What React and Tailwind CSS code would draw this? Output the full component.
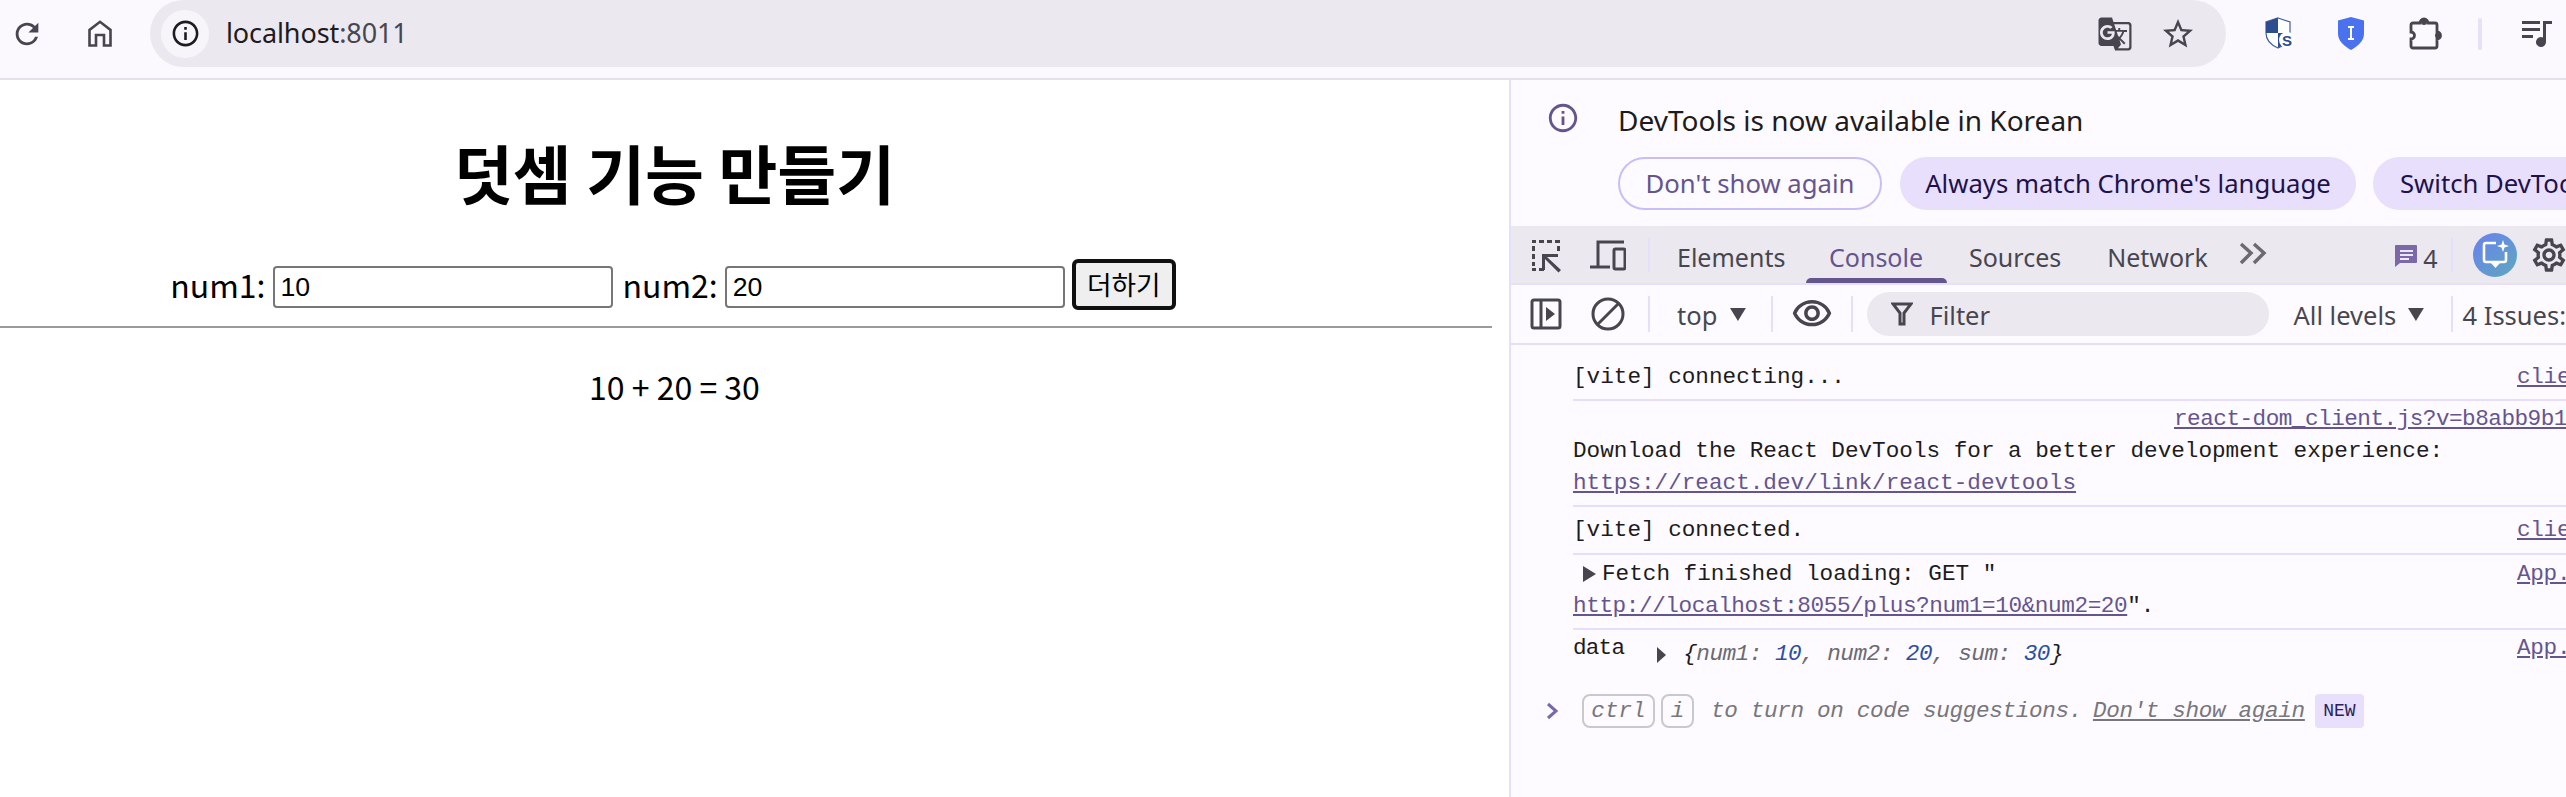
import React from "react";
import { MdGTranslate, MdOutlineSettings } from "react-icons/md";

const uiFont = "font-['Noto_Sans','Noto_Sans_CJK_KR',sans-serif]";
const monoFont = "font-['Liberation_Mono','Noto_Sans_CJK_KR',monospace]";
const pageFont = "font-['Noto_Sans_CJK_KR',sans-serif]";

function Icon({ d, size = 24, className = "", viewBox = "0 0 24 24" }) {
  return (
    <svg width={size} height={size} viewBox={viewBox} className={className} fill="currentColor">
      <path d={d} />
    </svg>
  );
}

const INFO =
  "M11 7h2v2h-2zm0 4h2v6h-2zm1-9C6.48 2 2 6.48 2 12s4.48 10 10 10 10-4.48 10-10S17.52 2 12 2zm0 18c-4.41 0-8-3.59-8-8s3.59-8 8-8 8 3.59 8 8-3.59 8-8 8z";
const RELOAD =
  "M17.65 6.35A7.958 7.958 0 0 0 12 4c-4.42 0-7.99 3.58-7.99 8s3.57 8 7.99 8c3.73 0 6.84-2.55 7.73-6h-2.08A5.99 5.99 0 0 1 12 18c-3.31 0-6-2.69-6-6s2.69-6 6-6c1.66 0 3.14.69 4.22 1.78L13 11h7V4l-2.35 2.35z";
const STAR =
  "M22 9.24l-7.19-.62L12 2 9.19 8.63 2 9.24l5.46 4.73L5.82 21 12 17.27 18.18 21l-1.63-7.03L22 9.24zM12 15.4l-3.76 2.27 1-4.28-3.32-2.88 4.38-.38L12 6.1l1.71 4.04 4.38.38-3.32 2.88 1 4.28L12 15.4z";
const EYE =
  "M12 6a9.77 9.77 0 0 1 8.82 5.5C19.17 14.87 15.79 17 12 17s-7.17-2.13-8.82-5.5A9.77 9.77 0 0 1 12 6m0-2C7 4 2.73 7.11 1 11.5 2.73 15.89 7 19 12 19s9.27-3.11 11-7.5C21.27 7.11 17 4 12 4zm0 5a2.5 2.5 0 0 1 0 5 2.5 2.5 0 0 1 0-5m0-2c-2.48 0-4.5 2.02-4.5 4.5S9.52 16 12 16s4.5-2.02 4.5-4.5S14.48 7 12 7z";

function Divider({ className = "" }) {
  return <div className={`w-[2px] shrink-0 bg-[#e6dffc] ${className}`} />;
}

function Caret({ className = "" }) {
  return (
    <svg width="18" height="14" viewBox="0 0 18 14" className={className} fill="#47464f">
      <path d="M1 0h16L9 13z" />
    </svg>
  );
}

function BrowserBar() {
  return (
    <div className={`flex h-[80px] shrink-0 border-b-[2px] border-[#e4e1ea] bg-[#fbf8fe] ${uiFont}`}>
      <div className="flex h-[67px] items-center">
        <Icon d={RELOAD} size={34} className="ml-[10px] text-[#48454f]" />
        <svg width="24" height="27" viewBox="0 0 24 27" className="ml-[44px] text-[#48454f]" fill="none" stroke="currentColor" strokeWidth="2.600">
          <path d="M1.500 25.500V10L12 1.800 22.500 10v15.500h-6.500V15H8v10.500z" />
        </svg>
      </div>
      <div className="ml-[38px] flex h-[67px] w-[2076px] shrink-0 items-center rounded-full bg-[#ece8f0]">
        <div className="ml-[11px] flex size-[48px] items-center justify-center rounded-full bg-[#f8f5fa]">
          <Icon d={INFO} size={31} className="text-[#1d1b20]" />
        </div>
        <span className="ml-[17px] mb-[2px] w-[177px] whitespace-nowrap text-[27px] leading-none tracking-[-0.1px] text-[#1d1b20]">
          localhost<span className="text-[#47464f]">:8011</span>
        </span>
        <MdGTranslate size={36} className="ml-[1694px] text-[#47464f]" />
        <Icon d={STAR} size={36} className="ml-[27px] text-[#47464f]" />
      </div>
      <div className="flex h-[67px] items-center">
        <svg width="30" height="33" viewBox="0 0 30 33" className="ml-[39px]">
          <path d="M13 1l12 4v11c0 7-5 12-12 15C6 28 1 23 1 16V5z" fill="#fff" stroke="#3d5f9d" strokeWidth="1.2" />
          <path d="M13 1v15H1V5z" fill="#2c4d8f" />
          <path d="M13 16h11c0 6-4 11-11 15z" fill="#2c4d8f" />
          <circle cx="22" cy="23" r="8" fill="#fff" />
          <text x="22" y="28.5" textAnchor="middle" fontSize="15" fontWeight="700" fill="#2c4d8f" fontFamily="Liberation Sans">
            S
          </text>
        </svg>
        <svg width="28" height="33" viewBox="0 0 28 33" className="ml-[42px]">
          <path d="M14 0l13 3.5v13C27 24 21 29 14 33 7 29 1 24 1 16.500v-13z" fill="#4a72ee" />
          <path d="M11 9h6v2h-2v10h2v2h-6v-2h2V11h-2z" fill="#fff" />
        </svg>
        <svg width="34" height="34" viewBox="0 0 34 34" className="ml-[43px] text-[#47464f]" fill="none" stroke="currentColor" strokeWidth="2.800">
          <path d="M5 6h7a4 4 0 0 1 8 0h7a2 2 0 0 1 2 2v7a3.500 3.500 0 0 1 0 7v7a2 2 0 0 1-2 2H5a2 2 0 0 1-2-2v-7a3.500 3.500 0 0 0 0-7V8a2 2 0 0 1 2-2z" />
          <circle cx="16" cy="5" r="3" fill="currentColor" stroke="none" />
          <circle cx="30" cy="18.500" r="3" fill="currentColor" stroke="none" />
        </svg>
        <div className="ml-[36px] h-[32px] w-[4px] rounded bg-[#e6e0fb]" />
        <svg width="32" height="28" viewBox="0 0 32 28" className="ml-[39px]" fill="#47464f">
          <path d="M1 1h18v3H1zM1 8h18v3H1zM1 15h11v3H1zM22 1h9v3h-6v18a5 5 0 1 1-3-4.500z" />
        </svg>
      </div>
    </div>
  );
}

function MainPage() {
  return (
    <div className={`w-[1509px] shrink-0 bg-white text-black ${pageFont}`}>
      <h1 className="mt-[44px] h-[94px] w-[1349px] text-center text-[64px] font-bold leading-[94px]">덧셈 기능 만들기</h1>
      <div className="mt-[41px] flex h-[51px] w-[1346px] justify-center gap-[7px] text-[32px] leading-[50px]">
        <label>num1:</label>
        <input
          readOnly
          value="10"
          className="mt-[7px] h-[42px] w-[340px] rounded-[4px] border-[2px] border-[#767676] px-[6px] font-['Liberation_Sans',sans-serif] text-[26.67px] leading-none text-black"
        />
        <label className="ml-[3px]">num2:</label>
        <input
          readOnly
          value="20"
          className="mt-[7px] h-[42px] w-[340px] rounded-[4px] border-[2px] border-[#767676] px-[6px] font-['Liberation_Sans',sans-serif] text-[26.67px] leading-none text-black"
        />
        <button className="h-[51px] w-[104px] rounded-[6px] border-[4px] border-[#101010] bg-[#efefef] text-[26.67px] leading-none">더하기</button>
      </div>
      <hr className="mt-[16px] h-[2px] w-[1492px] border-0 bg-[#9a9a9a]" />
      <p className="mt-[34px] w-[1349px] text-center text-[32px] leading-[48px]">10 + 20 = 30</p>
    </div>
  );
}

function Banner() {
  return (
    <div className="h-[146px] shrink-0 bg-[#fdfbff]">
      <div className="flex h-[76px] items-center">
        <Icon d={INFO} size={34} className="ml-[35px] text-[#65558f]" />
        <span className="ml-[38px] mt-[4px] text-[28px] text-[#1d1b20]">DevTools is now available in Korean</span>
      </div>
      <div className="mt-[1px] flex whitespace-nowrap text-[25.7px] leading-none">
        <button className="ml-[107px] h-[53px] w-[264px] shrink-0 rounded-full border-[2px] border-[#cbbdf5] text-[#65558f]">Don't show again</button>
        <button className="ml-[18px] h-[53px] w-[456px] shrink-0 rounded-full bg-[#e8dffc] text-[#1d124b]">Always match Chrome's language</button>
        <button className="ml-[17px] h-[53px] w-[300px] shrink-0 rounded-full bg-[#e8dffc] pl-[27px] text-left text-[#1d124b]">Switch DevTools to Korean</button>
      </div>
    </div>
  );
}

function TabBar() {
  return (
    <div className="flex h-[59px] shrink-0 items-center border-b-[2px] border-[#e6dffc] bg-[#ece8f0] text-[25px] text-[#47464f]">
      <svg width="36" height="36" viewBox="0 0 36 36" className="ml-[17px] shrink-0" fill="#47464f">
        <path d="M4 3h4v3H4zM11 3h5v3h-5zM19 3h5v3h-5zM27 3h5v3h-5zM4 9h3v5H4zM4 17h3v5H4zM4 25h3v4H4zM4 31h4v3H4zM11 31h5v3h-5zM29 9h3v5h-3z" />
        <path d="M14 17h16v3H19l14 13-2.500 2.500L17 22v11h-3z" />
      </svg>
      <svg width="36" height="32" viewBox="0 0 36 32" className="ml-[26px] shrink-0" fill="none" stroke="#47464f" strokeWidth="3">
        <path d="M34 3H8v25M0 28h20" />
        <rect x="24" y="10" width="11" height="20" rx="1.500" />
      </svg>
      <Divider className="ml-[22px] h-[34px]" />
      <span className="ml-[27px] mt-[6px] w-[106px] whitespace-nowrap">Elements</span>
      <div className="relative ml-[46px] flex h-[57px] items-center text-[#65558f]">
        <span className="mt-[6px] w-[94px] whitespace-nowrap">Console</span>
        <div className="absolute bottom-0 left-[-23px] h-[5px] w-[141px] rounded-t-[5px] bg-[#65558f]" />
      </div>
      <span className="ml-[46px] mt-[6px] w-[94px] whitespace-nowrap">Sources</span>
      <span className="ml-[46px] mt-[6px] w-[99px] whitespace-nowrap">Network</span>
      <svg width="28" height="24" viewBox="0 0 28 24" className="ml-[33px] mb-[2px] shrink-0" fill="none" stroke="#6b6a70" strokeWidth="3.500">
        <path d="M2 2l10 9-10 10M15 2l10 9-10 10" />
      </svg>
      <svg width="24" height="24" viewBox="0 0 24 24" className="ml-[127px] mt-[2px] shrink-0" fill="#7b68a8">
        <path d="M2 1h20a1 1 0 0 1 1 1v16a1 1 0 0 1-1 1H6l-5 4V2a1 1 0 0 1 1-1z" />
        <path d="M6 6h13v2H6zM6 10h13v2H6zM6 14h9v2H6z" fill="#ece8f0" />
      </svg>
      <span className="ml-[5px] mt-[8px] w-[20px] leading-none">4</span>
      <Divider className="ml-[13px] h-[34px]" />
      <div className="ml-[20px] flex size-[44px] shrink-0 items-center justify-center rounded-full bg-gradient-to-br from-[#6a7fef] to-[#5fa6bd]">
        <svg width="28" height="30" viewBox="0 0 28 30" fill="none" stroke="#fff" strokeWidth="2.600">
          <path d="M15 3H5a2 2 0 0 0-2 2v15a2 2 0 0 0 2 2h18a2 2 0 0 0 2-2v-8" />
          <path d="M10 23h9l-4.500 5z" fill="#fff" stroke="none" />
          <path d="M22 0l1.500 4.500L28 6l-4.500 1.500L22 12l-1.500-4.500L16 6l4.500-1.500z" fill="#fff" stroke="none" />
        </svg>
      </div>
      <MdOutlineSettings size={40} className="ml-[12px] shrink-0 text-[#47464f]" />
    </div>
  );
}

function FilterBar() {
  return (
    <div className="flex h-[60px] shrink-0 items-center whitespace-nowrap border-b-[2px] border-[#e6dffc] bg-[#fdfbff] text-[25.5px] text-[#47464f]">
      <svg width="32" height="32" viewBox="0 0 32 32" className="ml-[19px] shrink-0" fill="none" stroke="#47464f" strokeWidth="3">
        <rect x="2" y="2" width="28" height="28" rx="2" />
        <path d="M11 2v28" />
        <path d="M16 9l9 7-9 7z" fill="#47464f" stroke="none" />
      </svg>
      <svg width="34" height="34" viewBox="0 0 34 34" className="ml-[29px] shrink-0" fill="none" stroke="#47464f" strokeWidth="3">
        <circle cx="17" cy="17" r="15" />
        <path d="M7 27L27 7" />
      </svg>
      <Divider className="ml-[23px] h-[36px]" />
      <span className="ml-[27px] mt-[2px] w-[41px]">top</span>
      <Caret className="ml-[11px] mt-[2px]" />
      <Divider className="ml-[24px] h-[36px]" />
      <Icon d={EYE} size={42} className="ml-[18px] shrink-0" />
      <Divider className="ml-[18px] h-[36px]" />
      <div className="ml-[14px] flex h-[44px] w-[402px] shrink-0 items-center rounded-full bg-[#ece8f0]">
        <svg width="22" height="24" viewBox="0 0 22 24" className="ml-[24px]" fill="none" stroke="#47464f" strokeWidth="3">
          <path d="M2 2h18l-7 9v11h-4V11z" />
        </svg>
        <span className="ml-[17px] mt-[2px]">Filter</span>
      </div>
      <span className="ml-[25px] mt-[2px] w-[104px]">All levels</span>
      <Caret className="ml-[10px] mt-[2px]" />
      <Divider className="ml-[26px] h-[36px]" />
      <span className="ml-[10px] mt-[2px]">4 Issues:</span>
    </div>
  );
}

function Row({ children, source, className = "" }) {
  return (
    <div className={`ml-[62px] flex w-[1100px] border-b-[2px] border-[#e6dffc] ${className}`}>
      <div className="w-[944px] shrink-0">{children}</div>
      {source && <a className="tracking-[-0.3px] text-[#65558f] underline">{source}</a>}
    </div>
  );
}

function ConsolePanel() {
  return (
    <div className={`flex-1 bg-[#fdfbff] text-[22.67px] leading-[32px] text-[#1d1b20] ${monoFont} whitespace-nowrap`}>
      <Row source="client:495" className="h-[56px] pt-[16px]">
        [vite] connecting...
      </Row>
      <div className="ml-[62px] h-[106px] w-[1100px] border-b-[2px] border-[#e6dffc] pt-[2px]">
        <a className="ml-[601px] block h-[32px] tracking-[-0.5px] text-[#65558f] underline">react-dom_client.js?v=b8abb9b1</a>
        <div>Download the React DevTools for a better development experience:</div>
        <a className="text-[#65558f] underline">https://react.dev/link/react-devtools</a>
      </div>
      <Row source="client:618" className="h-[48px] pt-[7px]">
        [vite] connected.
      </Row>
      <Row source="App.jsx:14" className="h-[75px] pt-[3px]">
        <div className="flex items-center">
          <svg width="13" height="16" viewBox="0 0 13 16" className="ml-[10px] mr-[6px]" fill="#47464f">
            <path d="M0 0l13 8-13 8z" />
          </svg>
          Fetch finished loading: GET "
        </div>
        <div>
          <a className="tracking-[-0.4px] text-[#65558f] underline">http://localhost:8055/plus?num1=10&amp;num2=20</a>".
        </div>
      </Row>
      <div className="ml-[62px] flex h-[50px] w-[1100px] pt-[2px]">
        <div className="flex w-[944px] shrink-0 items-start">
          <span className="tracking-[-0.8px]">data</span>
          <svg width="9" height="16" viewBox="0 0 9 16" className="ml-[33px] mt-[15px]" fill="#47464f">
            <path d="M0 0l9 8-9 8z" />
          </svg>
          <span className="ml-[17px] mt-[6px] italic tracking-[-0.5px] text-[#6b6a72]">
            <span className="text-[#1d1b20]">{"{"}</span>num1: <span className="text-[#2a4fa3]">10</span>, num2:{" "}
            <span className="text-[#2a4fa3]">20</span>, sum: <span className="text-[#2a4fa3]">30</span>
            <span className="text-[#1d1b20]">{"}"}</span>
          </span>
        </div>
        <a className="tracking-[-0.3px] text-[#65558f] underline">App.jsx:15</a>
      </div>
      <div className="mt-[13px] flex h-[35px] items-center italic text-[#77767d]">
        <svg width="14" height="18" viewBox="0 0 14 18" className="ml-[35px] shrink-0" fill="none" stroke="#7a68ae" strokeWidth="3">
          <path d="M2 2l8 7-8 7" />
        </svg>
        <span className="ml-[22px] flex h-[34px] w-[73px] items-center justify-center rounded-[8px] border-[2px] border-[#c9c8cf]">ctrl</span>
        <span className="ml-[6px] flex h-[34px] w-[33px] items-center justify-center rounded-[8px] border-[2px] border-[#c9c8cf]">i</span>
        <span className="ml-[17px] tracking-[-0.35px]">to turn on code suggestions.</span>
        <span className="ml-[11px] tracking-[-0.35px] underline">Don't show again</span>
        <span className="ml-[10px] flex h-[34px] w-[49px] items-center justify-center rounded-[4px] bg-[#e8dffc] text-[18px] not-italic text-[#2a1e5c]">NEW</span>
      </div>
    </div>
  );
}

function DevTools() {
  return (
    <div className={`flex min-w-0 flex-1 flex-col overflow-hidden border-l-[2px] border-[#e6dffc] ${uiFont}`}>
      <Banner />
      <TabBar />
      <FilterBar />
      <ConsolePanel />
    </div>
  );
}

export default function App() {
  return (
    <div className="flex h-[797px] w-[2566px] flex-col overflow-hidden bg-white">
      <BrowserBar />
      <div className="flex min-h-0 flex-1">
        <MainPage />
        <DevTools />
      </div>
    </div>
  );
}
